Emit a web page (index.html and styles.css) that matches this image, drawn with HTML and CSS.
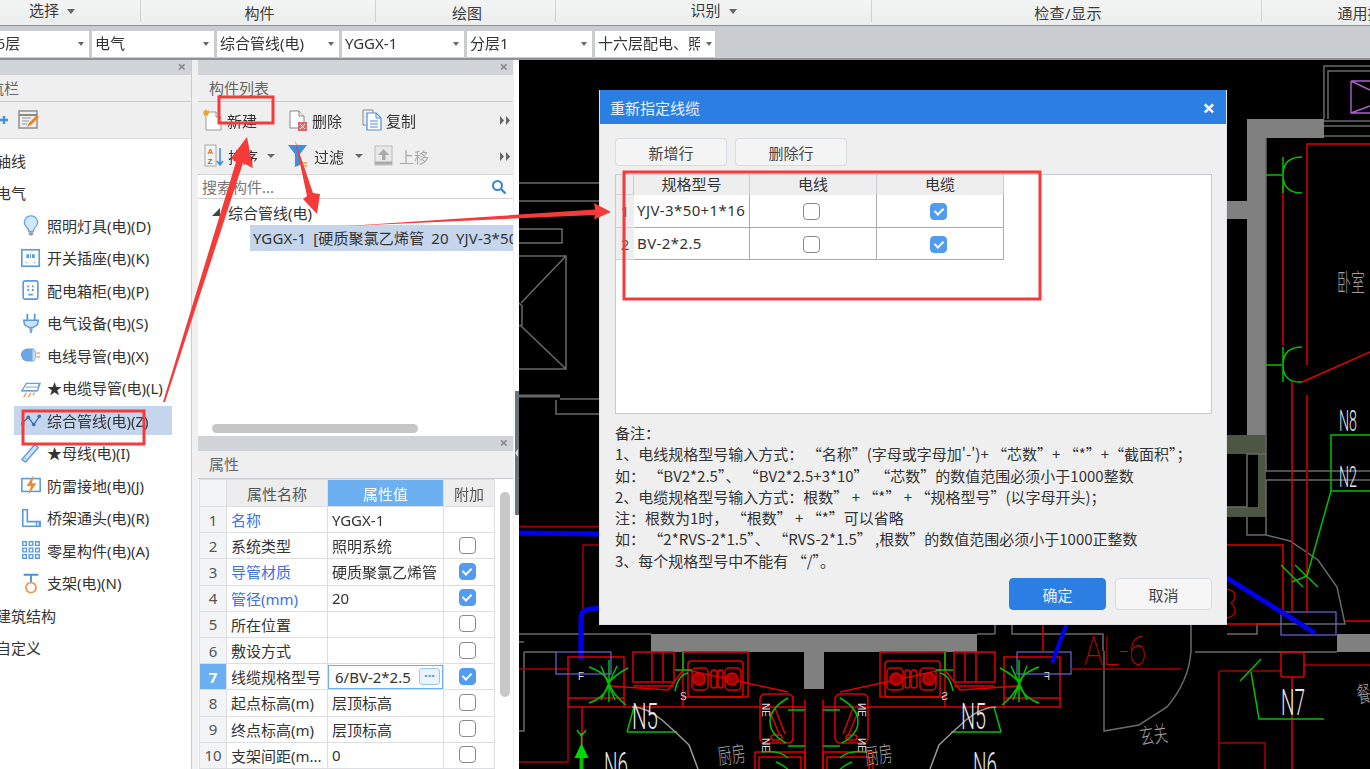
FILE: index.html
```html
<!DOCTYPE html>
<html lang="zh-CN">
<head>
  <meta charset="utf-8">
  <title>重新指定线缆</title>
  <link rel="stylesheet" href="styles.css">
</head>
<body>
<div class="app">

  <div class="ribbon">
    <div class="rib-group rib-1 raised">选择<span class="caret"></span></div>
    <div class="rib-group rib-2">构件</div>
    <div class="rib-group rib-3">绘图</div>
    <div class="rib-group rib-4 raised">识别<span class="caret"></span></div>
    <div class="rib-group rib-5">检查/显示</div>
    <div class="rib-group rib-6">通用操作</div>
  </div>

  <div class="combos">
    <div class="combo c-1"><span class="clip-left">16层</span></div>
    <div class="combo c-2">电气</div>
    <div class="combo c-2b">综合管线(电)</div>
    <div class="combo c-2b">YGGX-1</div>
    <div class="combo c-2c">分层1</div>
    <div class="combo c-3"><span class="combo-clip">十六层配电、照明</span></div>
  </div>

  <div class="main">
    <!-- left navigation -->
    <div class="panel nav">
      <div class="panel-top"><span class="x">×</span></div>
      <div class="panel-title nav-title">导航栏</div>
      <div class="nav-tools">
        <svg class="ico-s" width="12" height="16" viewBox="0 0 12 16"><path d="M0 8h2M5 4v8M1 8h8" stroke="#3d8fe0" stroke-width="2.4" fill="none"/></svg>
        <svg class="ico-s" width="22" height="20" viewBox="0 0 22 20"><rect x="1" y="1" width="18" height="17" fill="#eee" stroke="#8a8a8a" stroke-width="1.4"/><path d="M1 5h18" stroke="#8a8a8a" stroke-width="2"/><path d="M4 8h9M4 11h7M4 14h5" stroke="#999"/><path d="M9 17l2-4 8-8 2 2-8 8z" fill="#f08020"/></svg>
      </div>
      <div class="nav-tree">
        <div class="tree-row top">轴线</div>
        <div class="tree-row top">电气</div>
        <div class="tree-row"><svg class="ico" viewBox="0 0 24 24"><path d="M12 2a7 7 0 0 0-5 12c1.500 1.500 2.500 3 2.500 5h5c0-2 1-3.500 2.500-5A7 7 0 0 0 12 2z" fill="#d3e6fa" stroke="#6ba5e4" stroke-width="1.400"/><path d="M9.500 20h5v2l-1.500 1.500h-2l-1.500-1.500z" fill="#999"/></svg>照明灯具(电)(D)</div>
        <div class="tree-row"><svg class="ico" viewBox="0 0 24 24"><rect x="2" y="3" width="19" height="18" fill="#fff" stroke="#5a9be0" stroke-width="1.800"/><path d="M7 8h3v4H7zM13 8h3v4h-3z" fill="#5a9be0"/><path d="M11.500 7v5M6 16l2 2M17 16l-2 2" stroke="#5a9be0"/></svg>开关插座(电)(K)</div>
        <div class="tree-row"><svg class="ico" viewBox="0 0 24 24"><rect x="3.500" y="2" width="16" height="20" rx="2" fill="#fff" stroke="#5a9be0" stroke-width="1.800"/><path d="M8 7h2v2H8zM13 7h2v2h-2zM8 11h2v2H8zM13 11h2v2h-2zM9 16h5v2H9z" fill="#5a9be0"/></svg>配电箱柜(电)(P)</div>
        <div class="tree-row"><svg class="ico" viewBox="0 0 24 24"><path d="M8 2v7M16 2v7" stroke="#5a9be0" stroke-width="2"/><path d="M4 9h16l-1 5-5 3h-4l-5-3z" fill="#cfe2f8" stroke="#5a9be0" stroke-width="1.600"/><path d="M10 17h4l-1 6h-2z" fill="#7aa6d6"/></svg>电气设备(电)(S)</div>
        <div class="tree-row"><svg class="ico" viewBox="0 0 24 24"><path d="M8 5h6v14H8a7 7 0 0 1 0-14z" fill="#6ba5e4"/><path d="M14 5a3 7 0 0 1 0 14" fill="#cfe2f8" stroke="#6ba5e4"/><path d="M18 10h4M18 14h4" stroke="#f0954a" stroke-width="1.400"/></svg>电线导管(电)(X)</div>
        <div class="tree-row"><svg class="ico" viewBox="0 0 24 24"><path d="M2 15l5-8h15l-3 8z" fill="#fff" stroke="#6b9fd8" stroke-width="1.400"/><path d="M6 11h14M2 15h17" stroke="#6b9fd8"/><path d="M20 7v5" stroke="#6b9fd8"/><path d="M4 22l3-5M9 22l3-5M14 20l2-3" stroke="#f0954a" stroke-width="1.300"/></svg>★电缆导管(电)(L)</div>
        <div class="tree-row active"><svg class="ico" viewBox="0 0 24 24"><path d="M2 16l7-7 6 8 7-10" fill="none" stroke="#3c6cb4" stroke-width="1.400"/><circle cx="3" cy="16" r="1.800" fill="#3c6cb4"/><circle cx="9" cy="9" r="2" fill="#3c6cb4"/><circle cx="15" cy="17" r="2" fill="#3c6cb4"/><circle cx="21" cy="8" r="2" fill="#3c6cb4"/></svg>综合管线(电)(Z)</div>
        <div class="tree-row"><svg class="ico" viewBox="0 0 24 24"><path d="M2 19L16 3l4 3L6 22z" fill="#cfe2f8" stroke="#5a9be0" stroke-width="1.500"/><path d="M5 17l2 2" stroke="#5a9be0"/></svg>★母线(电)(I)</div>
        <div class="tree-row"><svg class="ico" viewBox="0 0 24 24"><rect x="2" y="5" width="20" height="14" fill="#fff" stroke="#5a9be0" stroke-width="1.700"/><path d="M15 1L7 13h5l-3 10 9-13h-5z" fill="#f08a2c"/></svg>防雷接地(电)(J)</div>
        <div class="tree-row"><svg class="ico" viewBox="0 0 24 24"><path d="M3 3h5v13h14v5H3z" fill="#fff" stroke="#5a9be0" stroke-width="1.800"/><path d="M18 16v5M21 16v5" stroke="#5a9be0" stroke-width="1.500"/></svg>桥架通头(电)(R)</div>
        <div class="tree-row"><svg class="ico" viewBox="0 0 24 24"><g fill="none" stroke="#5a9be0" stroke-width="1.500"><path d="M3 3h4v4H3zM10 3h4v4h-4zM17 3h4v4h-4zM3 10h4v4H3zM10 10h4v4h-4zM17 10h4v4h-4zM3 17h4v4H3zM10 17h4v4h-4zM17 17h4v4h-4z"/></g></svg>零星构件(电)(A)</div>
        <div class="tree-row"><svg class="ico" viewBox="0 0 24 24"><path d="M4 3h16M12 3v9" stroke="#4f8fd6" stroke-width="2"/><circle cx="12" cy="17" r="5.500" fill="#fff" stroke="#ef9a5c" stroke-width="2"/></svg>支架(电)(N)</div>
        <div class="tree-row top">建筑结构</div>
        <div class="tree-row top">自定义</div>
      </div>
    </div>

    <div class="gutter"></div>

    <!-- component list and properties -->
    <div class="mid">
      <div class="panel list-panel">
        <div class="panel-top"><span class="x">×</span></div>
        <div class="panel-title">构件列表</div>
        <div class="tool-row row-a">
          <span class="tool t-new"><svg width="20" height="22" viewBox="0 0 20 22"><path d="M3 3h10l5 5v13H3z" fill="#fff" stroke="#999"/><path d="M13 3v5h5" fill="#eee" stroke="#999"/><path d="M3 0l1 2 2-1-1 2 2 1-2 1 0 2-2-1-2 1 0-2-2-1 2-1-1-2 2 1z" fill="#f0a030"/></svg>新建</span>
          <span class="tool t-del"><svg width="20" height="22" viewBox="0 0 20 22"><path d="M2 2h9l5 5v12H2z" fill="#fff" stroke="#888"/><path d="M11 2v5h5" fill="#eee" stroke="#888"/><rect x="10" y="13" width="9" height="9" fill="#e2646a"/><path d="M12 15l5 5M17 15l-5 5" stroke="#fff"/></svg>删除</span>
          <span class="tool t-copy"><svg width="20" height="22" viewBox="0 0 20 22"><path d="M1 1h10v3M1 1v15h3" fill="none" stroke="#888"/><path d="M5 4h9l5 5v12H5z" fill="#fff" stroke="#4d8fd8" stroke-width="1.200"/><path d="M14 4v5h5M8 12h8M8 15h8M8 18h8" fill="none" stroke="#4d8fd8"/></svg>复制</span>
          <svg class="more" width="10" height="9" viewBox="0 0 10 9"><path d="M0 0l4 4.500-4 4.500zM6 0l4 4.500-4 4.500z" fill="#666"/></svg>
        </div>
        <div class="tool-row row-b">
          <span class="tool t-sort"><svg width="20" height="24" viewBox="0 0 20 24"><rect x="1" y="1" width="11" height="21" fill="#f3f3f3" stroke="#aaa"/><text x="3.500" y="10" class="az-a">A</text><text x="3.500" y="20" class="az-z">Z</text><path d="M16 4v16M13 17l3 4 3-4" fill="none" stroke="#3d8fe0" stroke-width="1.600"/></svg>排序<span class="caret small"></span></span>
          <span class="tool t-filter"><svg width="20" height="24" viewBox="0 0 20 24"><path d="M0 1h19l-7 9v11l-5 2V10z" fill="#3d8fe0"/><path d="M14 19h5M15 22h4" stroke="#f0a030" stroke-width="1.600"/></svg>过滤<span class="caret small"></span></span>
          <span class="tool t-up off"><svg width="20" height="22" viewBox="0 0 20 22"><rect x="1" y="1" width="17" height="19" fill="#e8e8e8" stroke="#bbb"/><path d="M9.500 4l6 6h-4v5H8v-5H4z" fill="#aaa"/><path d="M1 18h17" stroke="#aaa" stroke-width="3"/></svg>上移</span>
          <svg class="more" width="10" height="9" viewBox="0 0 10 9"><path d="M0 0l4 4.500-4 4.500zM6 0l4 4.500-4 4.500z" fill="#666"/></svg>
        </div>
        <div class="search">
          <span class="search-hint">搜索构件...</span>
          <svg width="16" height="16" viewBox="0 0 16 16"><circle cx="6.500" cy="6.500" r="4.500" fill="none" stroke="#2f86d8" stroke-width="2"/><path d="M10 10l4.500 4.500" stroke="#2f86d8" stroke-width="2.400"/></svg>
        </div>
        <div class="list-tree">
          <div class="list-head"><span class="tri"></span>综合管线(电)</div>
          <div class="list-item">YGGX-1 [硬质聚氯乙烯管 20 YJV-3*50+1*16/BV-2*2.5]</div>
          <div class="hscroll"></div>
        </div>
      </div>
      <div class="between"></div>
      <div class="panel prop-panel">
        <div class="panel-top"><span class="x">×</span></div>
        <div class="panel-title prop-title">属性</div>
        <div class="prop-body">
          <table class="prop">
            <tr class="prop-head"><th class="pn"></th><th class="pname">属性名称</th><th class="pval on">属性值</th><th class="pex">附加</th></tr>
            <tr><td class="pn">1</td><td class="blue">名称</td><td>YGGX-1</td><td></td></tr>
            <tr><td class="pn">2</td><td>系统类型</td><td>照明系统</td><td class="c"><span class="chk"></span></td></tr>
            <tr><td class="pn">3</td><td class="blue">导管材质</td><td>硬质聚氯乙烯管</td><td class="c"><span class="chk on"></span></td></tr>
            <tr><td class="pn">4</td><td class="blue">管径(mm)</td><td>20</td><td class="c"><span class="chk on"></span></td></tr>
            <tr><td class="pn">5</td><td>所在位置</td><td></td><td class="c"><span class="chk"></span></td></tr>
            <tr><td class="pn">6</td><td>敷设方式</td><td></td><td class="c"><span class="chk"></span></td></tr>
            <tr><td class="pn sel">7</td><td>线缆规格型号</td><td class="edit"><div class="edit-box"><span>6/BV-2*2.5</span><b class="dots">···</b></div></td><td class="c"><span class="chk on"></span></td></tr>
            <tr><td class="pn">8</td><td>起点标高(m)</td><td>层顶标高</td><td class="c"><span class="chk"></span></td></tr>
            <tr><td class="pn">9</td><td>终点标高(m)</td><td>层顶标高</td><td class="c"><span class="chk"></span></td></tr>
            <tr><td class="pn">10</td><td>支架间距(m...</td><td>0</td><td class="c"><span class="chk"></span></td></tr>
          </table>
          <div class="vscroll"></div>
        </div>
      </div>
      <div class="edge"></div>
      <div class="splitter"></div>
    </div>

    <!-- drawing area, coordinates follow the window -->
    <div class="cad">
      <svg class="cad-svg" width="851" height="709" viewBox="519 60 851 709">
        <defs>
          <g id="unit">
            <g class="line-r">
              <rect x="568" y="657" width="56" height="50"/>
              <path d="M568 698h56"/>
              <rect x="633" y="652" width="41" height="30"/>
              <path d="M652 652v30M663 652v30M633 686h41"/>
              <rect x="683" y="652" width="65" height="45"/>
              <rect x="688" y="661" width="55" height="36" rx="3"/>
              <rect x="692" y="668" width="16" height="22" rx="4"/>
              <rect x="725" y="668" width="16" height="22" rx="4"/>
              <rect x="711" y="670" width="6" height="18" rx="3"/>
              <rect x="718" y="670" width="5" height="18" rx="2.500"/>
              <path d="M624 707h181M683 697v10M610 686l58 4 15-20M687 670l101 22M805 700v69"/>
              <rect x="760" y="694" width="33" height="49" rx="5"/>
              <path d="M770 712l10 24M775 708l10 26"/>
              <rect x="771" y="735" width="11" height="5" rx="2.500"/>
              <rect x="755" y="752" width="50" height="20"/>
              <rect x="759" y="757" width="42" height="15"/>
            </g>
            <circle class="burner" cx="699" cy="679" r="6"/>
            <circle class="burner" cx="732" cy="679" r="6"/>
            <g class="line-g">
              <path d="M589 667q17 6 20 16q-3 14-20 20M628 668q-15 8-19 15q4 12 17 22M609 660v42M601 666l14 34M617 666l-16 34M675 670h17M627 732l7-25M627 732h50"/>
              <path d="M683 652v18M688 673q-10 2-13 18"/>
              <path d="M788 698q-18 10-18 24q0 12 16 21M788 710h17M788 746h17M762 752q18-2 26 6M776 762q10 4 14 10"/>
            </g>
            <path class="line-w light" d="M632 707q14 0 30 13q20 18 27 25l9 24"/>
            <text class="tiny" transform="translate(762 703) rotate(90)">NE</text>
            <text class="tiny" transform="translate(762 738) rotate(90)">NE</text>
            <text class="tiny" transform="translate(578 680)">F</text>
            <text class="tiny" transform="translate(680 700)">S</text>
          </g>
        </defs>

        <!-- walls -->
        <path class="wall" d="M651 634h326v18h-153v37h-20v-37H651z"/>
        <path class="wall" d="M1247 119h77v19h-58v297h-19v-216h-20v-18h20z"/>
        <path class="wall" d="M1337 634h33v18h-33z"/>
        <path class="olive" d="M1227 435h39v82h-39v-10h31v-53h-31z"/>

        <!-- left of the dialog -->
        <g class="line-w">
          <path d="M519 183h80M519 201h80M519 229h43v14h-43M519 256h47v113h-47M566 256l-45 47M566 369l-45-43M519 303l3 3v19l-3 1"/>
          <path d="M556 400v14h43M560 399h39"/>
          <path d="M519 634h132M524 652h32M524 652v79h-5M519 642h5"/>
        </g>
        <path class="line-t" d="M519 396h41"/>
        <path class="line-d" d="M519 526.500h80M583 620v-75h16M519 669h49M568 707v55h-49"/>
        <path class="line-r" d="M582 707v62"/>
        <path class="line-b" d="M519 533l80 1M599 608q-14 1-16 4q-2 2-2 6v42"/>

        <use href="#unit"/>
        <use href="#unit" transform="matrix(-1 0 0 1 1628 0)"/>
        <rect class="line-p" x="556" y="652" width="55" height="22"/>
        <rect class="line-p" x="1017" y="652" width="54" height="22"/>

        <path class="line-g arrow-g" d="M581.500 769v-20"/>
        <path class="green-fill" d="M581.500 743l-7 15h14z"/>
        <path class="line-g" d="M581.500 745v-12M577 730l4.500 6 4.500-6"/>

        <!-- below the dialog -->
        <g class="line-w">
          <path d="M995 625v9M977 634h18M1012 625v9h91v17M1191 625v26q-2 30-24 56l-28 18-35 6v-80M1195 652h142"/>
        </g>
        <path class="line-r" d="M1043 625v27"/>
        <path class="line-b thin" d="M1068 620l-16 43"/>
        <path class="line-d" d="M1071 669h110M1304 665h66M1219 671h62M1219 671v98M1219 743h46v26"/>
        <rect class="line-r" x="1281" y="652" width="23" height="25" rx="2"/>
        <path class="line-r" d="M1292 677v92"/>
        <path class="line-g" d="M1240 681l21-22M1251 672l8 47h65"/>

        <!-- right hand rooms -->
        <g class="line-w">
          <path d="M1324 119V66h46M1328 119V71h42M1324 121h46M1324 126h46M1324 136h46M1266 138v333h104M1266 480h104M1266 480v55M1247 454h19M1247 454v53h-20M1247 517v18h19l24 6 28 19 19 27 8 37h-88v10h-30"/>
        </g>
        <path class="line-m" d="M1351 81l19 9M1351 113l19-7M1351 81v32h19M1351 81h19"/>
        <path class="line-d thick" d="M1370 144h-63v221M1307 395v216M1227 545h56v66M1345 621h25"/>
        <path class="line-r" d="M1283 184v161M1292 382v229M1302 382l68-30M1227 624h53"/>
        <path class="line-d" d="M1227 589q8 2 8 6q0 5-4 8q4 3 4 8q0 5-8 7"/>
        <g class="line-g">
          <path d="M1283 157v36M1266 175h17M1302 157q-19 0-19 18t19 18M1283 347v35M1266 365h17M1302 347q-19 0-19 18t19 17"/>
          <path d="M1370 435h-39v56h39M1331 491l-24 85M1281 565l22 22M1295 565l23 22M1292 582l15-6"/>
        </g>
        <rect class="line-p" x="1281" y="612" width="55" height="23"/>
        <path class="line-b" d="M1227 578l88 55"/>

        <!-- drawing text -->
        <text class="cad-n" x="632" y="729" textLength="26" lengthAdjust="spacingAndGlyphs">N5</text>
        <text class="cad-n" x="961" y="729" textLength="25" lengthAdjust="spacingAndGlyphs">N5</text>
        <text class="cad-n" x="604" y="778" textLength="24" lengthAdjust="spacingAndGlyphs">N6</text>
        <text class="cad-n" x="973" y="778" textLength="24" lengthAdjust="spacingAndGlyphs">N6</text>
        <text class="cad-n" x="1281" y="715" textLength="24" lengthAdjust="spacingAndGlyphs">N7</text>
        <text class="cad-n small" x="1339" y="431" textLength="18" lengthAdjust="spacingAndGlyphs">N8</text>
        <text class="cad-n small" x="1339" y="487" textLength="18" lengthAdjust="spacingAndGlyphs">N2</text>
        <text class="cad-al" x="1084" y="665" textLength="62" lengthAdjust="spacingAndGlyphs">AL-6</text>
        <text class="cad-cn" transform="translate(1337 291) scale(1 1.700)">卧室</text>
        <text class="cad-cn" transform="translate(1141 745) rotate(-8) scale(1 1.600)">玄关</text>
        <text class="cad-cn" transform="translate(719 765) rotate(-8) scale(1 1.600)">厨房</text>
        <text class="cad-cn" transform="translate(866 765) rotate(-8) scale(1 1.600)">厨房</text>
        <text class="cad-cn" transform="translate(1358 703) rotate(-8) scale(1 1.600)">餐厅</text>
      </svg>
    </div>
  </div>

  <!-- modal -->
  <div class="dialog">
    <div class="dlg-title"><span>重新指定线缆</span><span class="dlg-x">×</span></div>
    <div class="dlg-body">
      <div class="dlg-actions">
        <button class="btn">新增行</button>
        <button class="btn">删除行</button>
      </div>
      <div class="dlg-box">
        <div class="cable-grid">
          <div class="gh gn"></div><div class="gh">规格型号</div><div class="gh">电线</div><div class="gh">电缆</div>
          <div class="gn">1</div><div class="gc spec">YJV-3*50+1*16</div><div class="gc mid-c"><span class="chk"></span></div><div class="gc mid-c"><span class="chk on"></span></div>
          <div class="gn">2</div><div class="gc spec">BV-2*2.5</div><div class="gc mid-c"><span class="chk"></span></div><div class="gc mid-c"><span class="chk on"></span></div>
        </div>
      </div>
      <div class="notes">
        <div>备注：</div>
        <div>1、电线规格型号输入方式： “名称”(字母或字母加'-')+ “芯数”+ “*”+“截面积”；</div>
        <div>如： “BV2*2.5”、 “BV2*2.5+3*10”  “芯数”的数值范围必须小于1000整数</div>
        <div>2、电缆规格型号输入方式：根数” + “*” + “规格型号”(以字母开头)；</div>
        <div>注：根数为1时， “根数” + “*”可以省略</div>
        <div>如： “2*RVS-2*1.5”、 “RVS-2*1.5” ,根数”的数值范围必须小于1000正整数</div>
        <div>3、每个规格型号中不能有 “/”。</div>
      </div>
      <div class="dlg-foot">
        <button class="btn primary">确定</button>
        <button class="btn plain">取消</button>
      </div>
    </div>
  </div>

  <!-- hand drawn marks on top of the screenshot -->
  <svg class="marks" width="1370" height="769" viewBox="0 0 1370 769">
    <rect x="219" y="97" width="54" height="26"/>
    <rect x="23" y="411" width="121" height="33"/>
    <rect x="624" y="172" width="416" height="127"/>
    <polygon points="247,137 253,168 243,163 165,402 163,402 236,162 231,158"/>
    <polygon points="295,140 313,193 320,194 317,214 303,199 307,196"/>
    <polygon points="347,226 595,209.500 594,203 611,212 594,219.500 595,215"/>
  </svg>
</div>
</body>
</html>
```

FILE: styles.css
```css
html, body {
  margin: 0;
  padding: 0;
  background: #000;
}

.app {
  position: relative;
  display: flex;
  flex-direction: column;
  width: 1370px;
  height: 769px;
  overflow: hidden;
  font-family: "Noto Sans", "Noto Sans CJK SC", sans-serif;
  font-size: 15px;
  color: #333;
  filter: blur(0.5px);
}

/* ribbon */
.ribbon {
  display: flex;
  flex: none;
  height: 26px;
  background: linear-gradient(#f3f4f4, #eceeee);
  border-bottom: 1px solid #8e9296;
  box-sizing: border-box;
  overflow: hidden;
}

.rib-group {
  flex: none;
  box-sizing: border-box;
  height: 22px;
  padding-left: 3px;
  border-right: 1px solid #cfd1d3;
  text-align: center;
  line-height: 27px;
  color: #3a3a3a;
}

.rib-group.raised { line-height: 21px; padding-left: 0; }
.rib-1 { width: 141px; padding-right: 36px; }
.rib-2 { width: 235px; }
.rib-3 { width: 180px; }
.rib-4 { width: 316px; }
.rib-5 { width: 390px; letter-spacing: 0.4px; }
.rib-6 { width: 208px; border: 0; }

.caret {
  display: inline-block;
  margin-left: 8px;
  vertical-align: 2px;
  border-style: solid;
  border-width: 5px 4.500px 0;
  border-color: #666 transparent transparent;
}

.caret.small {
  margin-left: 9px;
  border-width: 4px 4px 0;
  vertical-align: 1px;
}

/* combos */
.combos {
  display: flex;
  flex: none;
  height: 34px;
  box-sizing: border-box;
  padding-top: 5px;
  background: #c9ccd0;
  border-bottom: 2px solid #8e9296;
}

.combo {
  position: relative;
  flex: none;
  height: 26px;
  margin-right: 3px;
  box-sizing: border-box;
  padding-left: 3px;
  background: #fff;
  line-height: 25px;
  overflow: hidden;
  white-space: nowrap;
}

.combo::after {
  content: "";
  position: absolute;
  right: 5px;
  top: 11px;
  border-style: solid;
  border-width: 4px 3.500px 0;
  border-color: #666 transparent transparent;
}

.c-1 { width: 89px; }
.c-2 { width: 122px; }
.c-2b { width: 122px; }
.c-2c { width: 125px; }
.c-3 { width: 120px; margin: 0; }
.c-3::after { right: 3px; }
.clip-left { margin-left: -15px; }
.combo-clip { display: block; width: 102px; overflow: hidden; }

/* main row */
.main {
  display: flex;
  flex: 1;
  min-height: 0;
}

.panel {
  background: #fff;
  box-sizing: border-box;
}

.panel-top {
  position: relative;
  height: 15px;
  background: #d0d3d8;
}

.x {
  position: absolute;
  right: 5px;
  top: -3px;
  font-size: 15px;
  line-height: 18px;
  font-weight: 700;
  color: #888;
}

.panel-title {
  height: 27px;
  box-sizing: border-box;
  padding-left: 11px;
  background: #efefef;
  border-bottom: 1px solid #c8cbcf;
  line-height: 27px;
  color: #666;
}

.nav {
  width: 192px;
  flex: none;
  overflow: hidden;
  border-right: 1px solid #c8cbcf;
}

.nav-title { padding-left: 0; text-indent: -26px; }

.nav-tools {
  display: flex;
  align-items: center;
  gap: 7px;
  height: 37px;
  background: #efefef;
  border-bottom: 1px solid #dcdcdc;
  box-sizing: border-box;
}

.ico-s { flex: none; }
.nav-tools .ico-s:first-child { margin-left: -1px; }

.nav-tree {
  padding-top: 5px;
  background: #fff;
  height: 620px;
}

.tree-row {
  display: flex;
  align-items: center;
  height: 32.500px;
  padding-left: 20px;
  color: #333;
  white-space: nowrap;
}

.tree-row.top { padding-left: 0; margin-left: -4px; }

.tree-row.active {
  position: relative;
  z-index: 0;
}

.tree-row.active::before {
  content: "";
  position: absolute;
  z-index: -1;
  left: 14px;
  top: 2px;
  width: 158px;
  height: 29px;
  background: #c4d6ee;
}

.ico {
  flex: none;
  width: 22px;
  height: 22px;
  margin-right: 5px;
}

.gutter {
  flex: none;
  width: 6px;
  background: #f0f0f0;
}

.mid {
  position: relative;
  flex: none;
  width: 321px;
  display: flex;
  flex-direction: column;
  background: #f0f0f0;
}

.list-panel { height: 371px; width: 315px; flex: none; }
.between { height: 5px; flex: none; }
.prop-panel { flex: 1; width: 315px; }

.edge {
  position: absolute;
  right: 0;
  top: 0;
  bottom: 0;
  width: 5px;
  background: #fff;
}

.splitter {
  position: absolute;
  right: 0;
  top: 331px;
  width: 4px;
  height: 124px;
  background: #69737d;
}

.splitter::after {
  content: "";
  position: absolute;
  left: 0;
  top: 58px;
  border-style: solid;
  border-width: 4px 3px 4px 0;
  border-color: transparent #d8dce0 transparent transparent;
}

.tool-row {
  display: flex;
  align-items: center;
  height: 36px;
  background: #efefef;
  position: relative;
  white-space: nowrap;
}

.tool {
  display: flex;
  align-items: center;
  flex: none;
}

.tool svg { margin-right: 4px; }
.off { color: #aaa; }

.t-new { margin-left: 5px; width: 85px; }
.t-del { width: 74px; }
.t-del svg { margin-right: 4px; }
.t-copy { width: 70px; }
.t-sort { margin-left: 6px; width: 84px; }
.t-filter { width: 86px; }
.t-filter svg { margin-right: 6px; }
.t-filter .caret { margin-left: 11px; }
.t-up svg { margin-right: 5px; }

.more {
  position: absolute;
  right: 3px;
  top: 14px;
}

.search {
  display: flex;
  align-items: center;
  justify-content: space-between;
  height: 25px;
  box-sizing: border-box;
  padding: 0 6px 0 4px;
  background: #fff;
  border-top: 1px solid #d4d4d4;
  border-bottom: 1px solid #d4d4d4;
}

.search-hint { color: #777; }

.list-tree {
  position: relative;
  height: 237px;
  background: #fff;
  overflow: hidden;
}

.list-head {
  display: flex;
  align-items: center;
  height: 26px;
  padding-left: 14px;
  white-space: nowrap;
}

.tri {
  width: 0;
  height: 0;
  margin-right: 8px;
  border-style: solid;
  border-width: 0 0 8px 8px;
  border-color: transparent transparent #444;
}

.list-item {
  height: 26px;
  margin-left: 52px;
  padding-left: 3px;
  background: #c5d6ec;
  line-height: 26px;
  white-space: nowrap;
  overflow: hidden;
  word-spacing: 3px;
  letter-spacing: 0.15px;
}

.hscroll {
  position: absolute;
  left: 14px;
  bottom: 3px;
  width: 206px;
  height: 9px;
  border-radius: 5px;
  background: #c6c6c6;
}

.prop-title { padding-left: 11px; height: 28px; }

.prop-body {
  position: relative;
  height: 290px;
  background: #fff;
}

.prop {
  border-collapse: collapse;
  table-layout: fixed;
  width: 295px;
  margin-left: 1px;
}

.prop th, .prop td {
  box-sizing: border-box;
  height: 26.200px;
  padding: 0 0 0 4px;
  border: 1px solid #dcdee2;
  font-weight: 400;
  white-space: nowrap;
  overflow: hidden;
}

.prop-head th { background: #ededed; text-align: center; padding: 0; height: 27px; color: #555; }
.prop-head .pval { background: #6cb0f2; color: #fff; }
.prop .pn { width: 27px; padding: 0; background: #f3f4f6; text-align: center; color: #555; }
.prop .pn.sel { background: #6cb0f2; color: #fff; font-weight: 700; }
.pname { width: 101px; }
.pval { width: 116px; }
.pex { width: 51px; }
.blue { color: #3c70e4; }
.prop .c { padding: 0 4px 0 0; text-align: center; }
.prop .chk { margin-top: 1px; }

.prop .edit { padding: 0; }

.edit-box {
  display: flex;
  align-items: center;
  justify-content: space-between;
  height: 24px;
  box-sizing: border-box;
  padding: 0 2px 0 6px;
  border: 1px solid #6cb0f2;
}

.dots {
  width: 19px;
  height: 15px;
  border: 1px solid #9cc6ee;
  border-radius: 3px;
  font-size: 13px;
  line-height: 12px;
  text-align: center;
  color: #4a8fd8;
  background: #eaf3fc;
}

.vscroll {
  position: absolute;
  left: 302px;
  top: 13px;
  width: 10px;
  height: 205px;
  border-radius: 5px;
  background: #c8c8c8;
}

.chk {
  display: inline-block;
  position: relative;
  width: 17px;
  height: 17px;
  box-sizing: border-box;
  margin-top: 3px;
  border: 1.500px solid #8a8a8a;
  border-radius: 4px;
  background: #fff;
  vertical-align: top;
}

.chk.on {
  border-color: #519cf0;
  background: #519cf0;
}

.chk.on::after {
  content: "";
  position: absolute;
  left: 4.500px;
  top: 2px;
  width: 4px;
  height: 7px;
  border: solid #fff;
  border-width: 0 2px 2px 0;
  transform: rotate(45deg);
}

/* drawing */
.cad {
  flex: 1;
  min-width: 0;
  background: #000;
  overflow: hidden;
}

.cad-svg { display: block; }

.cad-svg path, .cad-svg rect, .cad-svg polyline { fill: none; }
.cad-svg .wall { fill: #808080; stroke: none; }
.cad-svg .olive { fill: #4d5642; stroke: none; }
.line-w { stroke: #6a6a6a; stroke-width: 1.500; fill: none; }
.line-w.light { stroke: #9a9a9a; }
.line-t { stroke: #666; stroke-width: 3; fill: none; }
.line-r, .line-r rect, .line-r path { stroke: #e00000; stroke-width: 1.500; }
.line-d { stroke: #a80000; stroke-width: 1.500; fill: none; }
.line-d.thick { stroke-width: 2; }
.line-g, .line-g path { stroke: #00c000; stroke-width: 1.500; }
.arrow-g { stroke-width: 4; }
.cad-svg .green-fill { fill: #00d800; }
.line-b { stroke: #0000f0; stroke-width: 5; fill: none; }
.line-b.thin { stroke-width: 4; }
.line-p { stroke: #6868d8; stroke-width: 1.200; }
.line-m { stroke: #b060d0; stroke-width: 1.400; }
.burner { fill: #a00000; stroke: #e00000; stroke-width: 1.500; }

.cad-n {
  font-family: Roboto, "Liberation Sans", sans-serif;
  font-weight: 300;
  font-size: 36px;
  fill: #e8e8e8;
}

.cad-n.small { font-size: 29px; }

.cad-al {
  font-family: Roboto, "Liberation Sans", sans-serif;
  font-weight: 100;
  font-size: 41px;
  fill: #d00000;
}

.cad-cn {
  font-family: "Noto Sans CJK SC", sans-serif;
  font-weight: 300;
  font-size: 14px;
  fill: #a0a0a0;
}

.tiny {
  font-family: "Liberation Sans", sans-serif;
  font-size: 10px;
  fill: #ddd;
}

.az-a, .az-z {
  font-family: "Liberation Sans", sans-serif;
  font-size: 8px;
  font-weight: 700;
}

.az-a { fill: #e07030; }
.az-z { fill: #777; }

/* dialog */
.dialog {
  position: absolute;
  left: 599px;
  top: 90px;
  width: 628px;
  height: 535px;
  box-sizing: border-box;
  background: #efefef;
  border: solid #dfe3e8;
  border-width: 0 1px 1px;
}

.dlg-title {
  display: flex;
  align-items: center;
  justify-content: space-between;
  height: 34px;
  padding: 0 11px 0 10px;
  background: #2c7fe2;
  color: #e8f1fc;
}

.dlg-x {
  font-size: 22px;
  font-weight: 700;
  color: #fff;
  line-height: 20px;
}

.dlg-body { padding: 14px 14px 0 15px; }

.dlg-actions {
  display: flex;
  gap: 8px;
}

.btn {
  font: inherit;
  color: #444;
  height: 28px;
  width: 112px;
  padding: 0;
  border: 1.500px solid #d6dae2;
  border-radius: 4px;
  background: #f4f4f4;
}

.dlg-box {
  height: 240px;
  margin-top: 8px;
  box-sizing: border-box;
  background: #fff;
  border: 1.500px solid #c8ccd2;
}

.cable-grid {
  display: grid;
  grid-template-columns: 18px 116px 127px 127px;
  grid-template-rows: 20px 33px 32px;
  width: 388px;
}

.cable-grid > div {
  box-sizing: border-box;
  overflow: hidden;
  white-space: nowrap;
}

.gh {
  background: #eeeeee;
  border-right: 1px solid #c8ccd2;
  text-align: center;
  line-height: 19px;
}

.cable-grid .gn {
  background: #eee;
  text-align: center;
  line-height: 33px;
  color: #555;
  border-bottom: 1px solid #d4d4d4;
}

.gc {
  border-right: 1px solid #aaa;
  border-bottom: 1px solid #aaa;
  line-height: 31px;
  padding-left: 3px;
  background: #fff;
}

.spec { letter-spacing: 0.4px; }
.mid-c { text-align: center; padding: 0 3px 0 0; }
.mid-c .chk { margin-top: 7.500px; }

.notes {
  margin-top: 8px;
  font-family: "Noto Sans CJK SC", sans-serif;
  font-size: 15px;
  line-height: 21.300px;
  color: #333;
}

.notes div { white-space: pre; }

.dlg-foot {
  display: flex;
  justify-content: flex-end;
  gap: 9px;
  margin-top: 7px;
}

.dlg-foot .btn {
  width: 97px;
  height: 32px;
}

.btn.primary {
  background: #2c7fe2;
  border-color: #2c7fe2;
  color: #e8f1fc;
}

.btn.plain { background: #f6f6f6; }

/* annotation */
.marks {
  position: absolute;
  left: 0;
  top: 0;
  pointer-events: none;
}

.marks rect {
  fill: none;
  stroke: #f53a3a;
  stroke-width: 3;
}

.marks polygon { fill: #f53a3a; }
```
